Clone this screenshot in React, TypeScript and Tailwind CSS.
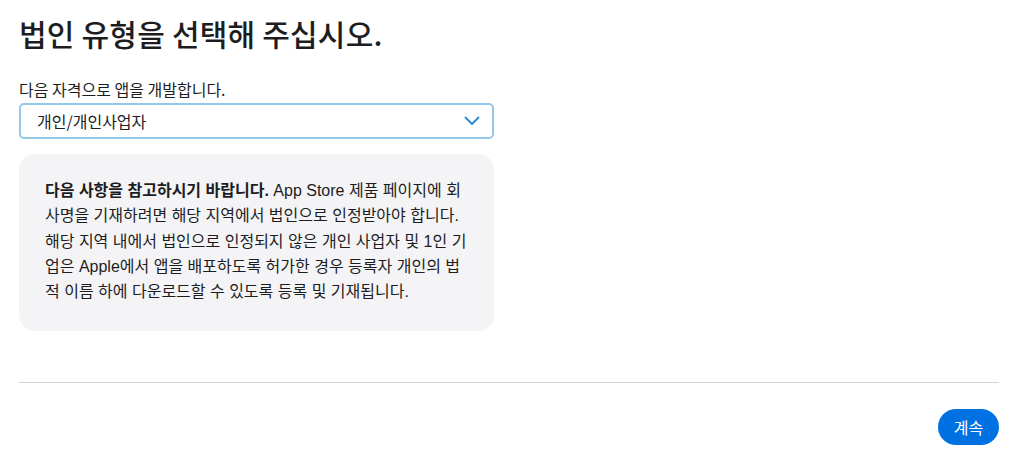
import React from "react";

export default function App() {
  const font = { fontFamily: '"Noto Sans CJK KR", "Noto Sans", sans-serif' };
  const noteFont = { fontFamily: '"Liberation Sans", "Noto Sans CJK KR", sans-serif' };
  return (
    <div className="w-[1015px] h-[466px] bg-white text-[#1d1d1f] pl-[19px] pr-[16px] pt-[12px]" style={font}>
      <h1 className="text-[30px] leading-[42px] font-medium tracking-[0.2px]">법인 유형을 선택해 주십시오.</h1>
      <div className="mt-[24px] text-[16px] leading-[22px]">다음 자격으로 앱을 개발합니다.</div>
      <div className="mt-[3px] w-[475px] h-[36px] rounded-[5px] border-2 border-[#94c8ea] flex items-center justify-between pl-[16px] pr-[12px] text-[16px]">
        <span>개인/개인사업자</span>
        <svg width="16" height="10" viewBox="0 0 16 10" fill="none">
          <path d="M1.5 1.5 L8 8 L14.5 1.5" stroke="#2a8ad4" strokeWidth="1.8" strokeLinecap="round" strokeLinejoin="round" />
        </svg>
      </div>
      <div className="mt-[15px] w-[475px] h-[177px] rounded-[16px] bg-[#f4f4f6] pl-[26px] pr-[24px] pt-[24px] text-[16px] leading-[25.3px] text-[#1d1d1f] break-all" style={noteFont}>
        <span className="font-bold">다음 사항을 참고하시기 바랍니다.</span> App Store 제품 페이지에 회사명을 기재하려면 해당 지역에서 법인으로 인정받아야 합니다. 해당 지역 내에서 법인으로 인정되지 않은 개인 사업자 및 1인 기업은 Apple에서 앱을 배포하도록 허가한 경우 등록자 개인의 법적 이름 하에 다운로드할 수 있도록 등록 및 기재됩니다.
      </div>
      <div className="mt-[51px] h-px bg-[#d2d2d7]" />
      <div className="mt-[26px] flex justify-end">
        <button className="h-[36px] w-[61px] rounded-full bg-[#0071e3] text-white text-[16px] flex items-center justify-center">계속</button>
      </div>
    </div>
  );
}
